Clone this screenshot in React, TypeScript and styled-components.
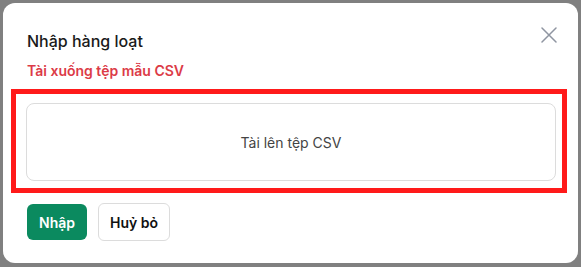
import { createGlobalStyle } from "styled-components";
import styled from "styled-components";

const GlobalStyle = createGlobalStyle`
  * {
    box-sizing: border-box;
  }

  body {
    margin: 0;
    background: #808080;
    font-family: Inter, "Noto Sans", "Liberation Sans", sans-serif;
  }
`;

export default function App() {
  return (
    <>
      <GlobalStyle />
      <Overlay>
        <Modal>
          <CloseButton aria-label="Đóng">
            <svg width="16" height="16" viewBox="0 0 16 16">
              <path
                d="M1 1 L15 15 M15 1 L1 15"
                stroke="currentColor"
                strokeWidth="1.5"
                strokeLinecap="round"
              />
            </svg>
          </CloseButton>
          <Title>Nhập hàng loạt</Title>
          <DownloadLink href="#">Tài xuống tệp mẫu CSV</DownloadLink>
          <Highlight>
            <Dropzone>Tài lên tệp CSV</Dropzone>
          </Highlight>
          <Actions>
            <Button $primary>Nhập</Button>
            <Button>Huỷ bỏ</Button>
          </Actions>
        </Modal>
      </Overlay>
    </>
  );
}

const Overlay = styled.div`
  width: 581px;
  height: 267px;
  padding: 3px 3px 4px 3px;
`;

const Modal = styled.div`
  position: relative;
  width: 575px;
  height: 260px;
  background: #fff;
  border-radius: 12px;
  padding: 26px 22px 0 23px;

  display: flex;
  flex-direction: column;
`;

const CloseButton = styled.button`
  position: absolute;
  top: 24px;
  right: 21px;
  width: 16px;
  height: 16px;
  padding: 0;
  border: none;
  background: none;
  color: #8f95a1;
  display: flex;
  align-items: center;
  justify-content: center;
  cursor: pointer;
`;

const Title = styled.h2`
  margin: 0 0 0 1px;
  font-size: 16px;
  line-height: 24px;
  font-weight: 500;
  color: #1a1a1a;
`;

const DownloadLink = styled.a`
  margin: 8px 0 0 1px;
  font-size: 14px;
  line-height: 20px;
  font-weight: 600;
  color: #dc3b47;
  text-decoration: none;
  align-self: flex-start;
`;

const Highlight = styled.div`
  margin: 8px -11px 0 -15px;
  border: 5px solid #ff1a1a;
  padding: 9px 6px 7px 10px;
`;

const Dropzone = styled.div`
  height: 78px;
  border: 1px solid #dcdcdc;
  border-radius: 8px;
  display: flex;
  align-items: center;
  justify-content: center;
  font-size: 14px;
  color: #444;
`;

const Actions = styled.div`
  margin: 10px 0 0 1px;
  display: flex;
  align-items: center;
  gap: 11px;
`;

const Button = styled.button<{ $primary?: boolean }>`
  height: ${(p) => (p.$primary ? "36px" : "38px")};
  padding: 0 ${(p) => (p.$primary ? "12px" : "11px")};
  border-radius: 6px;
  border: ${(p) => (p.$primary ? "none" : "1px solid #dcdcdc")};
  background: ${(p) => (p.$primary ? "#0b8a5f" : "#fff")};
  color: ${(p) => (p.$primary ? "#fff" : "#111")};
  font-family: inherit;
  font-size: 14px;
  font-weight: 600;
  cursor: pointer;
`;
